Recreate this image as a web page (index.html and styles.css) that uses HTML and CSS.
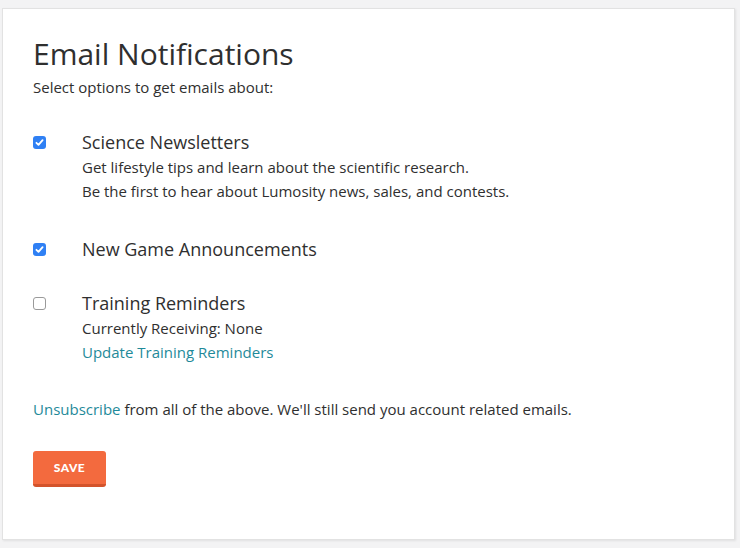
FILE: index.html
```html
<!DOCTYPE html>
<html>
<head>
<meta charset="utf-8">
<link rel="stylesheet" href="styles.css">
</head>
<body>
<div class="card">
  <h1 class="title">Email Notifications</h1>
  <p class="subtitle">Select options to get emails about:</p>

  <div class="option first">
    <span class="box checked"><svg viewBox="0 0 13 13" width="13" height="13"><path d="M3.4 6.8 L5.5 8.9 L9.6 4.2" fill="none" stroke="#fff" stroke-width="1.8" stroke-linecap="round" stroke-linejoin="round"/></svg></span>
    <div class="content padded">
      <div class="opt-title">Science Newsletters</div>
      <div class="line">Get lifestyle tips and learn about the scientific research.</div>
      <div class="line">Be the first to hear about Lumosity news, sales, and contests.</div>
    </div>
  </div>

  <div class="option">
    <span class="box checked"><svg viewBox="0 0 13 13" width="13" height="13"><path d="M3.4 6.8 L5.5 8.9 L9.6 4.2" fill="none" stroke="#fff" stroke-width="1.8" stroke-linecap="round" stroke-linejoin="round"/></svg></span>
    <div class="content">
      <div class="opt-title">New Game Announcements</div>
    </div>
  </div>

  <div class="option">
    <span class="box"></span>
    <div class="content">
      <div class="opt-title">Training Reminders</div>
      <div class="line">Currently Receiving: None</div>
      <div class="line"><a class="link" href="#">Update Training Reminders</a></div>
    </div>
  </div>

  <p class="unsub"><a class="link" href="#">Unsubscribe</a> from all of the above. We'll still send you account related emails.</p>

  <button class="save">SAVE</button>
</div>
</body>
</html>
```

FILE: styles.css
```css
html, body {
  margin: 0;
  padding: 0;
  background: #f3f3f4;
}
body {
  padding: 8px 5px 6px 2px;
  font-family: "Open Sans", Lato, sans-serif;
  color: #2f2f2f;
}
.card {
  background: #fff;
  border: 1px solid #e2e2e2;
  box-shadow: 1px 1px 2px rgba(0,0,0,0.08);
  height: 532px;
  box-sizing: border-box;
  padding: 28px 30px 0 30px;
}
.title {
  margin: 0;
  font-size: 30px;
  font-weight: 400;
  line-height: 34px;
}
.subtitle {
  margin: 6px 0 0 0;
  font-size: 15px;
  line-height: 20px;
}
.option {
  display: flex;
  align-items: flex-start;
  margin-top: 28px;
}
.option.first {
  margin-top: 32px;
}
.content.padded {
  padding-bottom: 5px;
}
.box {
  flex: none;
  width: 13px;
  height: 13px;
  margin-top: 7px;
  margin-right: 36px;
  box-sizing: border-box;
  border-radius: 3px;
  border: 1px solid #9a9a9a;
  background: #fff;
  display: flex;
}
.box.checked {
  border: none;
  background: #2f80f4;
}
.box svg { display: block; }
.opt-title {
  font-size: 18px;
  line-height: 26px;
}
.line {
  font-size: 15px;
  line-height: 24px;
}
.link {
  color: #1f8a9a;
  text-decoration: none;
}
.unsub {
  margin: 35px 0 0 0;
  font-size: 15px;
  line-height: 20px;
}
.save {
  display: block;
  margin-top: 32px;
  width: 73px;
  height: 36px;
  background: #f36a3e;
  border: none;
  border-bottom: 3px solid #d3532b;
  border-radius: 3px;
  color: #fff;
  font-family: Lato, sans-serif;
  font-weight: 900;
  font-size: 12px;
  letter-spacing: 0.5px;
  padding: 0;
}
```
